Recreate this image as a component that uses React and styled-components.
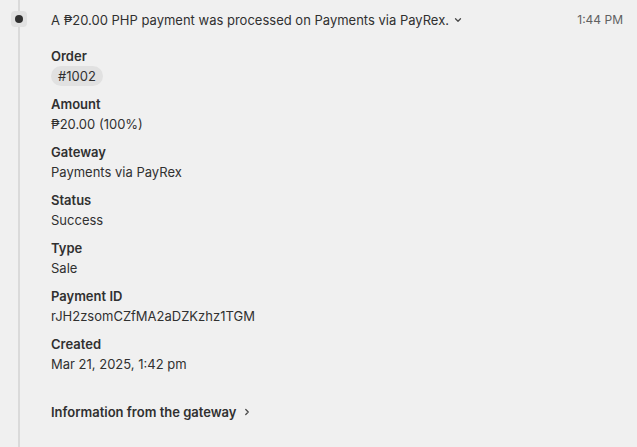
import React from "react";
import styled, { createGlobalStyle } from "styled-components";

const GlobalStyle = createGlobalStyle`
  html, body {
    margin: 0;
    padding: 0;
    background: #f0f0f0;
  }
  body {
    font-family: Inter, "Noto Sans", sans-serif;
    color: #303030;
    -webkit-font-smoothing: antialiased;
  }
`;

const details = [
  { label: "Order", value: "#1002", chip: true },
  { label: "Amount", value: "₱20.00 (100%)" },
  { label: "Gateway", value: "Payments via PayRex" },
  { label: "Status", value: "Success" },
  { label: "Type", value: "Sale" },
  { label: "Payment ID", value: "rJH2zsomCZfMA2aDZKzhz1TGM" },
  { label: "Created", value: "Mar 21, 2025, 1:42 pm" },
];

const App = () => {
  return (
    <>
      <GlobalStyle />
      <Event>
        <Rail>
          <Line $h="11px" />
          <Marker>
            <Dot />
          </Marker>
          <Line $grow />
        </Rail>
        <Body>
          <Header>
            <Title>
              A ₱20.00 PHP payment was processed on Payments via PayRex.
              <svg width="12" height="12" viewBox="0 0 12 12" fill="none">
                <path d="M3.5 4.75 6 7.25l2.5-2.5" stroke="#4a4a4a" strokeWidth="1.3" strokeLinecap="round" strokeLinejoin="round" />
              </svg>
            </Title>
            <Time>1:44 PM</Time>
          </Header>
          <List>
            {details.map((d) => (
              <Item key={d.label}>
                <Label>{d.label}</Label>
                {d.chip ? <Chip>{d.value}</Chip> : <Value>{d.value}</Value>}
              </Item>
            ))}
          </List>
          <GatewayLink>
            Information from the gateway
            <svg width="12" height="12" viewBox="0 0 12 12" fill="none">
              <path d="M4.75 3.5 7.25 6l-2.5 2.5" stroke="#4a4a4a" strokeWidth="1.3" strokeLinecap="round" strokeLinejoin="round" />
            </svg>
          </GatewayLink>
        </Body>
      </Event>
    </>
  );
};

export default App;

const Event = styled.div`
  display: flex;
  min-height: 447px;
`;

const Rail = styled.div`
  width: 38px;
  display: flex;
  flex-direction: column;
  align-items: center;
  flex-shrink: 0;
`;

const Line = styled.div`
  width: 2px;
  background: #dadada;
  height: ${(p) => p.$h || "auto"};
  flex: ${(p) => (p.$grow ? 1 : "none")};
`;

const Marker = styled.div`
  width: 16px;
  height: 16px;
  border-radius: 4px;
  background: #e1e1e1;
  display: flex;
  align-items: center;
  justify-content: center;
`;

const Dot = styled.div`
  width: 8px;
  height: 8px;
  border-radius: 50%;
  background: #303030;
`;

const Body = styled.div`
  flex: 1;
  margin-left: 13px;
  padding: 10px 14px 0 0;
`;

const Header = styled.div`
  display: flex;
  justify-content: space-between;
  align-items: center;
  height: 20px;
`;

const Title = styled.div`
  display: flex;
  align-items: center;
  gap: 3px;
  font-size: 13px;
  line-height: 20px;
  color: #303030;
`;

const Time = styled.div`
  font-size: 12px;
  line-height: 16px;
  color: #616161;
`;

const List = styled.div`
  display: flex;
  flex-direction: column;
  gap: 8px;
  margin-top: 16px;
`;

const Item = styled.div`
  display: flex;
  flex-direction: column;
  align-items: flex-start;
`;

const Label = styled.div`
  font-size: 13px;
  line-height: 20px;
  font-weight: 600;
  color: #303030;
`;

const Value = styled.div`
  font-size: 13px;
  line-height: 20px;
  color: #303030;
`;

const Chip = styled.span`
  display: inline-flex;
  align-items: center;
  height: 20px;
  padding: 0 7px;
  border-radius: 10px;
  background: #e1e1e1;
  font-size: 13px;
  color: #303030;
`;

const GatewayLink = styled.div`
  display: flex;
  align-items: center;
  gap: 4px;
  margin-top: 28px;
  font-size: 13px;
  line-height: 20px;
  font-weight: 600;
  color: #303030;
`;
